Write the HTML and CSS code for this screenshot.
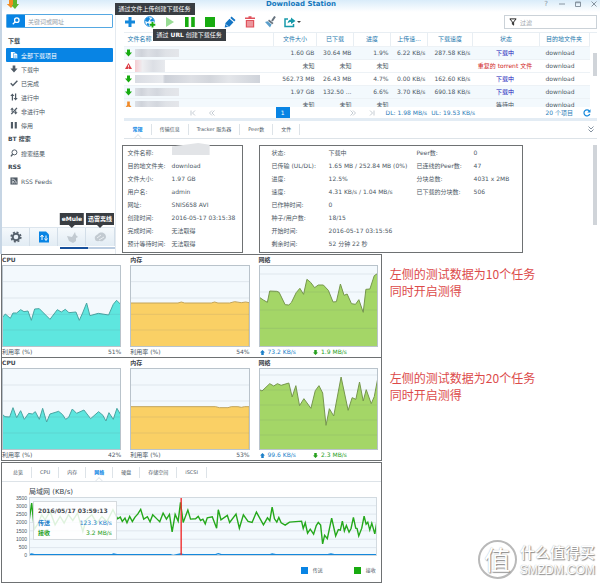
FILE: index.html
```html
<!DOCTYPE html>
<html lang="zh-CN">
<head>
<meta charset="utf-8">
<title>Download Station</title>
<link rel="stylesheet" href="styles.css">
</head>
<body>
<section class="window">
  <header class="titlebar">
    <svg class="logo" viewBox="0 0 12 9"><path d="M2 0h4v3h2L4 8 0 4h2z" fill="#f08a1c"/><path d="M6 0h4v4h2L8 9 4 5h2z" fill="#5db52c"/><path d="M2 0h4v4L4 7 0 4h2z" fill="#f28c22"/></svg>
    <h1>Download Station</h1>
    <div class="controls">
      <button aria-label="帮助">?</button>
      <button aria-label="最小化"><svg viewBox="0 0 6 6"><path d="M0 3h6"/></svg></button>
      <button aria-label="最大化"><svg viewBox="0 0 6 6"><path d="M.5 1h5v4.500h-5zM.5 1.700h5"/></svg></button>
      <button aria-label="关闭"><svg viewBox="0 0 6 6"><path d="M.5.5l5 5m0-5l-5 5"/></svg></button>
    </div>
  </header>
  <div class="workspace">
    <aside class="sidebar">
      <form class="search">
        <button type="button" aria-label="搜索"><svg viewBox="0 0 10 10"><circle cx="6" cy="4" r="2.800"/><path d="M4 6L1 9"/></svg></button>
        <input type="text" aria-label="关键词或网址" placeholder="关键词或网址">
      </form>
      <nav>
        <h2>下载</h2>
        <a class="on" href="#"><svg viewBox="0 0 9 9"><path d="M1 1h4l2 2v5H1z" fill="#fff"/><path d="M4 2.500h3L8.500 4v4.500H4z" fill="#fff" stroke="#0884e4" stroke-width=".6"/><path d="M5 5.500h2.500M5 7h2.500" stroke="#0884e4" stroke-width=".6"/></svg>全部下载项目</a>
        <a href="#"><svg viewBox="0 0 9 9"><path d="M3 .5h3V4h2.500l-4 4.500L.5 4H3z"/></svg>下载中</a>
        <a href="#"><svg viewBox="0 0 9 9"><path class="ln" d="M.8 4.800l2.400 2.400L8.300 2"/></svg>已完成</a>
        <a href="#"><svg viewBox="0 0 9 9"><path d="M2 8.500V3.500H.3L2.700.5 5 3.500H3.400v5zM5.600.5H7v5h1.700L6.300 8.500 4 5.500h1.600z"/></svg>进行中</a>
        <a href="#"><svg viewBox="0 0 9 9"><path d="M.3 3L2.400.5 4.500 3H3v2.500H1.800V3zM5.800 4H7v2h1.500L6.400 8.500 4.300 6h1.500z"/><path class="ln" d="M7.800 1L1.500 8"/></svg>非进行中</a>
        <a href="#"><svg viewBox="0 0 9 9"><path d="M1 1h2.400v7.500H1zM5.300 1h2.400v7.500H5.300z"/></svg>停用</a>
        <h2>BT 搜索</h2>
        <a href="#"><svg viewBox="0 0 9 9"><circle class="thin" cx="5" cy="3.800" r="2.800"/><path class="ln" d="M3 6L1 8.300"/></svg>搜索结果</a>
        <h2>RSS</h2>
        <a href="#"><svg viewBox="0 0 9 9"><path d="M.5.5h8v8h-8z"/><path d="M2 4.500a2.600 2.600 0 0 1 2.700 2.700M2 2.300a4.800 4.800 0 0 1 5 4.900" fill="none" stroke="#fff" stroke-width=".9"/><circle cx="2.600" cy="6.600" r=".7" fill="#fff"/></svg>RSS Feeds</a>
      </nav>
      <div class="modes">
        <button aria-label="设置"><svg viewBox="0 0 12 12"><circle cx="6" cy="6" r="3.300" fill="none" stroke="#56616c" stroke-width="2"/><circle cx="6" cy="6" r="4.800" fill="none" stroke="#56616c" stroke-width="1.600" stroke-dasharray="2 1.770"/></svg></button>
        <button aria-label="下载"><svg viewBox="0 0 12 12"><path d="M1 .5h7l3 3v8H1z" fill="#0884e4"/><path d="M4 9V5M2.500 6L4 4l1.500 2M8 4.500v4M6.500 7.500L8 9.500l1.500-2" fill="none" stroke="#fff"/></svg></button>
        <button aria-label="eMule"><svg viewBox="0 0 12 12"><path d="M1 5l5 1 3-5 .8 3L12 6l-2 1v3l-3 2-4-2z" fill="#c2cad1"/></svg><span class="tip up">eMule</span></button>
        <button aria-label="迅雷离线"><svg viewBox="0 0 12 12"><path d="M1 8c-1-3 2-4 3-5 3-3 8-1 8 3 0 2-2 2-2 3-2 2-3 1-4 1S1 11 1 8z" fill="#c2cad1"/><path d="M3 7l4-3M5 9l5-3" stroke="#e9eef2"/></svg><span class="tip up">迅雷离线</span></button>
      </div>
      <div class="underline"></div>
    </aside>

    <main class="main">
      <div class="toolbar">
        <button aria-label="添加"><svg viewBox="0 0 12 12"><path d="M4.500 1h3v3.500H11v3H7.500V11h-3V7.500H1v-3h3.500z" fill="#1488dc"/></svg><span class="tip file">通过文件上传创建下载任务</span></button>
        <button aria-label="添加 URL"><svg viewBox="0 0 12 12"><circle cx="5.500" cy="5.500" r="4.800" fill="#eef8fd" stroke="#1488dc"/><path d="M2 2l3-1 1 2-2 3-3-1zM6 4l3-2 1 3-2 3zM3 7l3 1-1 2-2-1z" fill="#1488dc"/><path d="M8.500 5.500v6M5.500 8.500h6" stroke="#fff" stroke-width="3.400"/><path d="M8.500 6v5.500M5.800 8.700h5.500" stroke="#18ab10" stroke-width="1.900"/></svg><span class="tip url">通过 <b>URL</b> 创建下载任务</span></button>
        <button aria-label="开始"><svg viewBox="0 0 12 12"><path d="M2 1l8 5-8 5z" fill="#98dc94"/></svg></button>
        <button aria-label="暂停"><svg viewBox="0 0 12 12"><path d="M1 1h3.600v10H1zM7.200 1h3.600v10H7.200z" fill="#18ab10"/></svg></button>
        <button aria-label="停止"><svg viewBox="0 0 12 12"><path d="M1 1h10v10H1z" fill="#18ab10"/></svg></button>
        <button aria-label="编辑"><svg viewBox="0 0 12 12"><path d="M7.500.5l4 3.500-1.200 1.400-4-3.500zM5.500 2.800l4 3.500-4 4.200-4.800 1L1.500 7z" fill="#1475c4"/><path d="M2 8.500L4 10.500" stroke="#fff"/></svg></button>
        <button aria-label="删除"><svg viewBox="0 0 12 12"><path d="M1 1.500h3.500V.3h3v1.200H11V3H1zM1.800 4h8.400v7.500H1.800z" fill="#e0525c"/><path d="M4 5v5.500M6 5v5.500M8 5v5.500" stroke="#fff" stroke-width=".8"/></svg></button>
        <button aria-label="清除"><svg viewBox="0 0 12 12"><path d="M11 .5L8 5" stroke="#66727e" stroke-width="2"/><path d="M5 3.500l4.500 3.500-1.200 1.300L4 5z" fill="#66727e"/><path d="M3.600 5.200l4 3.400L6 11.500 1 6z" fill="#5b9fcb"/></svg></button>
        <button aria-label="分享"><svg viewBox="0 0 12 12"><path d="M4 3H1v7.500h8.500V8" fill="none" stroke="#179aaa" stroke-width="1.500"/><path d="M3.500 7.500C4 4.500 5.500 3.500 7 3.500v-2L11.500 5 7 8V6C5.500 6 4.500 6.500 3.500 7.500z" fill="#179aaa"/></svg><i class="caret"></i></button>
        <label class="filter"><svg viewBox="0 0 9 9"><path d="M1 1h7L5.200 4.500V8L3.800 7V4.500z" fill="none" stroke="#222" stroke-width="1.100"/></svg><input type="text" aria-label="过滤" placeholder="过滤"></label>
      </div>

      <div class="tasks">
        <table>
          <colgroup><col><col class="c-size"><col class="c-num"><col class="c-num"><col class="c-num"><col class="c-speed"><col class="c-status"><col class="c-dest"></colgroup>
          <thead><tr><th>文件名称</th><th>文件大小</th><th>已下载</th><th>进度</th><th>上传速...</th><th>下载速度</th><th>状态</th><th>目的地文件夹</th></tr></thead>
          <tbody>
            <tr class="alt"><td><div class="name"><svg class="down" viewBox="0 0 8 8"><path d="M2.300 0h3.400v3.500H8L4 8 0 3.500h2.300z"/></svg><span class="mask"></span></div></td><td>1.60 GB</td><td>30.64 MB</td><td>1.9%</td><td>6.22 KB/s</td><td>287.58 KB/s</td><td class="run">下载中</td><td>download</td></tr>
            <tr><td><div class="name"><svg class="warn" viewBox="0 0 8 8"><path d="M4 .5L8 7.500H0z"/><path d="M4 3v2.300M4 6v1" stroke="#fff"/></svg><span class="mask pink"></span></div></td><td>未知</td><td>未知</td><td>未知</td><td></td><td></td><td class="bad">重复的 torrent 文件</td><td>download</td></tr>
            <tr><td><div class="name"><svg class="down" viewBox="0 0 8 8"><path d="M2.300 0h3.400v3.500H8L4 8 0 3.500h2.300z"/></svg><span class="mask long"></span></div></td><td>562.73 MB</td><td>26.43 MB</td><td>4.7%</td><td>0.00 KB/s</td><td>162.60 KB/s</td><td class="run">下载中</td><td>download</td></tr>
            <tr class="alt"><td><div class="name"><svg class="down" viewBox="0 0 8 8"><path d="M2.300 0h3.400v3.500H8L4 8 0 3.500h2.300z"/></svg><span class="mask"></span></div></td><td>1.97 GB</td><td>132.50 ...</td><td>6.6%</td><td>3.70 KB/s</td><td>690.18 KB/s</td><td class="run">下载中</td><td>download</td></tr>
            <tr class="alt"><td><div class="name"><svg class="wait" viewBox="0 0 8 8"><path d="M2.500 0h3v4L8 7H5L3.500 5.500 2 7.500H0L2.500 4z"/></svg><span class="mask"></span></div></td><td>未知</td><td>未知</td><td>未知</td><td></td><td></td><td>等待中</td><td>download</td></tr>
          </tbody>
        </table>
        <div class="rail"><i></i></div>
      </div>

      <div class="pager">
        <div class="back"><button aria-label="首页"><svg viewBox="0 0 6 6"><path d="M1 .5v5M5 .5L2.500 3 5 5.500"/></svg></button><button aria-label="上一页"><svg viewBox="0 0 6 6"><path d="M3 .5L.5 3 3 5.500M5.500.5L3 3l2.500 2.500"/></svg></button></div>
        <button class="page">1</button>
        <div class="fwd"><button aria-label="下一页"><svg viewBox="0 0 6 6"><path d="M.5.5L3 3 .5 5.500M3 .5L5.500 3 3 5.500"/></svg></button><button aria-label="末页"><svg viewBox="0 0 6 6"><path d="M5 .5v5M1 .5L3.500 3 1 5.500"/></svg></button></div>
        <span class="rate">DL: 1.98 MB/s</span><span class="rate">UL: 19.53 KB/s</span>
        <span class="total">20 个项目</span>
        <button class="refresh" aria-label="刷新"><svg viewBox="0 0 8 8"><path d="M6.300 2A3 3 0 1 0 6.800 5"/><path d="M7.500.3v3.200H4.300z" class="tipfill"/></svg></button>
      </div>

      <div class="tabs">
        <button class="on">常规</button><button>传输信息</button><button>Tracker 服务器</button><button>Peer数</button><button>文件</button>
        <svg class="collapse" viewBox="0 0 6 7"><path d="M.5.5L3 3 5.500.5M.5 3.500L3 6l2.500-2.500"/></svg>
      </div>

      <div class="details">
        <dl class="box general">
          <dt>文件名称:</dt><dd><span class="smudge"></span></dd>
          <dt>目的地文件夹:</dt><dd>download</dd>
          <dt>文件大小:</dt><dd>1.97 GB</dd>
          <dt>用户名:</dt><dd>admin</dd>
          <dt>网址:</dt><dd>SNIS658 AVI</dd>
          <dt>创建时间:</dt><dd>2016-05-17 03:15:38</dd>
          <dt>完成时间:</dt><dd>无法取得</dd>
          <dt>预计等待时间:</dt><dd>无法取得</dd>
        </dl>
        <div class="box transfer">
          <dl>
            <dt>状态:</dt><dd>下载中</dd>
            <dt>已传输 (UL/DL):</dt><dd>1.65 MB / 252.84 MB (0%)</dd>
            <dt>进度:</dt><dd>12.5%</dd>
            <dt>速度:</dt><dd>4.31 KB/s / 1.04 MB/s</dd>
            <dt>已作种时间:</dt><dd>0</dd>
            <dt>种子/用户数:</dt><dd>18/15</dd>
            <dt>开始时间:</dt><dd>2016-05-17 03:15:56</dd>
            <dt>剩余时间:</dt><dd>52 分钟 22 秒</dd>
          </dl>
          <dl>
            <dt>Peer数:</dt><dd>0</dd>
            <dt>已连线的Peer数:</dt><dd>47</dd>
            <dt>分块总数:</dt><dd>4031 x 2MB</dd>
            <dt>已下载的分块数:</dt><dd>506</dd>
          </dl>
        </div>
        <div class="rail tall"><i></i></div>
      </div>
    </main>
  </div>
</section>

<section class="stats">
  <div class="panel trio first">
    <figure>
      <figcaption>CPU</figcaption>
      <svg class="area" viewBox="6 46 358 246" preserveAspectRatio="none"><path class="cpu" d="M6 292V205L16 193 31 206 39 190 50 190 62 180 72 186 84 184 94 212 104 178 118 177 150 209 172 180 184 187 196 179 207 189 228 187 238 212 248 190 260 160 270 198 295 191 326 196 340 164 350 152 364 166V292z"/><path class="grid" d="M6 96H364M6 145H364M6 194H364M6 241H364"/></svg>
      <p><span>利用率 (%)</span><span>51%</span></p>
    </figure>
    <figure>
      <figcaption>内存</figcaption>
      <svg class="area" viewBox="391 46 358 246" preserveAspectRatio="none"><path class="mem" d="M391 292V160H535L545 157 555 160H635L645 157 655 160H690L705 156 725 159 738 157 749 159V292z"/><path class="grid" d="M391 96H749M391 145H749M391 194H749M391 241H749"/></svg>
      <p><span>利用率 (%)</span><span>54%</span></p>
    </figure>
    <figure>
      <figcaption>网络</figcaption>
      <svg class="area" viewBox="27 46 356 246" preserveAspectRatio="none"><path class="net" d="M27 292V142L40 151 52 158 59 124 80 125 87 128 105 165 116 166 124 158 138 129 149 116 160 134 170 89 181 98 193 114 204 106 219 106 234 122 248 157 258 156 270 103 281 137 290 133 303 162 315 164 325 150 338 188 346 119 358 118 371 78 383 70V292z"/><path class="grid" d="M27 73H383M27 127H383M27 181H383M27 236H383"/></svg>
      <p class="io"><span class="tx"><svg viewBox="0 0 6 6"><path d="M3 0l3 3H4.500v3h-3V3H0z"/></svg>73.2 KB/s</span><span class="rx"><svg viewBox="0 0 6 6"><path d="M3 6L0 3h1.500V0h3v3H6z"/></svg>1.9 MB/s</span></p>
    </figure>
  </div>
  <p class="note">左侧的测试数据为10个任务<br>同时开启测得</p>

  <div class="panel trio second">
    <figure>
      <figcaption>CPU</figcaption>
      <svg class="area" viewBox="6 40 358 246" preserveAspectRatio="none"><path class="cpu" d="M6 286V178L15 186 29 187 39 159 50 189 62 168 73 194 86 176 97 178 106 171 118 194 128 161 140 202 150 178 176 170 188 180 197 194 206 188 217 163 230 176 252 166 272 192 296 171 309 182 318 199 327 174 340 194 351 161 364 183V286z"/><path class="grid" d="M6 91H364M6 139H364M6 187H364M6 235H364"/></svg>
      <p><span>利用率 (%)</span><span>42%</span></p>
    </figure>
    <figure>
      <figcaption>内存</figcaption>
      <svg class="area" viewBox="391 40 358 246" preserveAspectRatio="none"><path class="mem" d="M391 286V156H648L659 159H685L695 156H715L725 158 735 156H749V286z"/><path class="grid" d="M391 91H749M391 139H749M391 187H749M391 235H749"/></svg>
      <p><span>利用率 (%)</span><span>53%</span></p>
    </figure>
    <figure>
      <figcaption>网络</figcaption>
      <svg class="area" viewBox="27 40 356 246" preserveAspectRatio="none"><path class="net" d="M27 286V104L36 109 59 87 71 94 82 87 93 92 116 85 126 127 137 93 148 153 161 132 182 161 195 108 206 93 217 115 227 212 237 162 250 184 272 67 293 167 305 129 316 134 327 82 338 139 347 105 362 147 371 126 383 63V286z"/><path class="grid" d="M27 61H383M27 106H383M27 151H383M27 196H383M27 241H383"/></svg>
      <p class="io"><span class="tx"><svg viewBox="0 0 6 6"><path d="M3 0l3 3H4.500v3h-3V3H0z"/></svg>99.6 KB/s</span><span class="rx"><svg viewBox="0 0 6 6"><path d="M3 6L0 3h1.500V0h3v3H6z"/></svg>2.3 MB/s</span></p>
    </figure>
  </div>
  <p class="note">左侧的测试数据为20个任务<br>同时开启测得</p>

  <div class="panel lan">
    <div class="tabs">
      <button>总览</button><button>CPU</button><button>内存</button><button class="on">网络</button><button>硬盘</button><button>存储空间</button><button>iSCSI</button>
    </div>
    <h3>局域网 (KB/s)</h3>
    <div class="plot">
      <ul><li>3500</li><li>3000</li><li>2500</li><li>2000</li><li>1500</li><li>1000</li><li>500</li><li>0</li></ul>
      <div class="canvas">
        <svg class="lines" viewBox="87 112 1040 176" preserveAspectRatio="none">
          <path class="grid" d="M87 138H1127M87 163H1127M87 188H1127M87 213H1127M87 238H1127M87 263H1127"/>
          <path class="recv" d="M88 178L95 130 103 208 115 190 125 165 135 180 150 155 165 195 180 170 192 190 205 165 218 182 232 160 248 215 258 180 275 165 290 190 305 170 320 185 338 150 352 177 360 172 366 185 374 175 380 189 388 170 396 185 404 172 412 163 421 149 430 178 441 171 449 186 457 165 470 178 478 186 488 160 498 178 507 164 515 216 524 164 533 184 540 128 548 188 562 151 570 178 585 177 593 170 600 182 607 178 614 192 620 174 635 171 648 205 653 150 661 180 680 167 687 188 706 163 716 205 728 165 742 185 754 188 767 157 788 195 800 174 807 183 814 142 821 177 828 187 834 173 841 189 853 196 866 187 902 184 907 206 913 189 920 220 928 208 938 223 946 197 952 188 959 196 965 252 971 226 979 236 992 175 1004 228 1012 209 1018 211 1024 184 1030 213 1036 197 1044 217 1050 206 1057 173 1064 205 1068 206 1073 228 1082 205 1089 169 1095 193 1100 187 1106 210 1112 190 1121 222 1127 187"/>
          <path class="send" d="M87 284L95 282 103 284H335L340 282 350 284H510L518 286 540 282 550 284H645L653 281 662 284H808L814 282 825 284H980L990 282 1000 284H1127"/>
          <path class="cursor" d="M542 112V288"/>
        </svg>
        <div class="readout">
          <strong>2016/05/17 03:59:13</strong>
          <p class="tx"><b>传送</b><span>123.3 KB/s</span></p>
          <p class="rx"><b>接收</b><span>3.2 MB/s</span></p>
        </div>
      </div>
    </div>
    <div class="legend"><span><i class="blue"></i>传送</span><span><i class="green"></i>接收</span></div>
  </div>
  <div class="brand">
    <span class="seal">值</span>
    <div><b>什么值得买</b><span>SMZDM.COM</span></div>
  </div>
</section>
</body>
</html>
```

FILE: styles.css
```css
* { box-sizing: border-box; margin: 0; padding: 0; }
body {
  font: 6px/13px "DejaVu Sans", "Noto Sans CJK SC", sans-serif;
  color: #4c5864;
  background: #fff;
  overflow-x: hidden;
}
button, input { font: inherit; color: inherit; background: none; border: 0; min-width: 0; }
svg { display: block; }
a { color: inherit; text-decoration: none; }
ul { list-style: none; }

/* window frame */
.window { border-left: 2px solid #c6d5e4; }
.titlebar {
  display: grid;
  grid-template-columns: 1fr auto 1fr;
  height: 12px;
  line-height: 8px;
  background: linear-gradient(#d9ecf9, #fff);
}
.logo { width: 12px; height: 9px; margin-left: 5px; }
.titlebar h1 { font-size: 7px; color: #1578bd; }
.controls { display: flex; justify-content: flex-end; gap: 10px; padding-right: 3px; color: #8794a0; font-size: 7px; }
.controls button { width: 6px; height: 8px; line-height: 8px; }
.controls svg { width: 6px; height: 6px; fill: none; stroke: #8794a0; }
.workspace { display: flex; }

/* sidebar */
.sidebar { flex: 0 0 19%; display: flex; flex-direction: column; border-right: 1px solid #e4eaf0; padding-top: 2px; }
.search { display: flex; height: 14px; margin: 0 2px 6px 4px; border: 1px solid #55a8e2; border-radius: 1px; }
.search button { flex: 0 0 18px; background: #0884e4; display: grid; place-items: center; }
.search svg { width: 8px; height: 8px; fill: none; stroke: #fff; stroke-width: 1.600; }
.search input { flex: 1; padding-left: 3px; }
input::placeholder { color: #9aa3ab; opacity: 1; }
.sidebar nav { margin: 0 2px 0 4px; }
.sidebar h2 { font-size: 6px; line-height: 14px; color: #414b55; padding-left: 2px; }
.sidebar a { display: flex; align-items: center; gap: 3px; height: 14px; padding-left: 4px; border-radius: 1px; }
.sidebar a svg { width: 8px; height: 8px; fill: #505b66; }
.sidebar .on { background: #0884e4; color: #fff; }
.ln { fill: none; stroke: #505b66; stroke-width: 1.600; }
.thin { fill: none; stroke: #505b66; stroke-width: 1.100; }
.modes { display: flex; height: 19px; margin-top: auto; background: linear-gradient(#f5f9fc, #e2ecf4); border-top: 1px solid #dce5ed; }
.modes button { position: relative; flex: 1; display: grid; place-items: center; border-right: 1px solid #d3dee8; }
.modes svg { width: 12px; height: 12px; }
.underline { height: 2px; margin: 1px 0 5px 58px; background: linear-gradient(90deg, #17509c 50%, #b9cbe0 50%); }

/* dark hints over the controls */
.tip { position: absolute; z-index: 2; white-space: nowrap; background: #393d42; color: #fff; line-height: 12px; padding: 0 4px; }
.tip.up { bottom: 21px; left: 50%; transform: translateX(-50%); padding: 0 2px; font-weight: bold; }
.tip.up::after { content: ""; position: absolute; top: 100%; left: 50%; margin-left: -3px; border: 3px solid transparent; border-top-color: #393d42; border-bottom: 0; }
.tip.file { left: -9px; bottom: 13px; }
.tip.url { left: 9px; top: 13px; }

/* main area */
.main { flex: 1; min-width: 0; padding: 0 3px 0 8px; }
.toolbar { display: flex; align-items: center; gap: 8px; height: 20px; }
.toolbar button { position: relative; width: 12px; height: 12px; }
.toolbar button svg { width: 12px; height: 12px; }
.caret { position: absolute; left: 13px; top: 5px; border: 2px solid transparent; border-top-color: #444; border-bottom: 0; }
.filter { display: flex; align-items: center; gap: 3px; width: 93px; height: 14px; margin-left: auto; padding-left: 4px; border: 1px solid #cbd2d8; }
.filter svg { width: 8px; height: 8px; }
.filter input { flex: 1; }

.tasks { display: flex; height: 75px; overflow: hidden; border-top: 1px solid #e8eef3; }
table { flex: 1; width: 100%; table-layout: fixed; border-collapse: collapse; }
.c-size { width: 43px; }
.c-num { width: 37px; }
.c-speed { width: 45px; }
.c-status { width: 67px; }
.c-dest { width: 50px; }
th, td { height: 13px; line-height: 12px; white-space: nowrap; text-align: right; padding: 0 2px 0 0; border-bottom: 1px solid #edf2f6; }
th { font-weight: normal; color: #2478ae; text-align: center; border-right: 1px solid #e8eef3; padding: 0; }
th:first-child { text-align: left; padding-left: 4px; }
th:last-child, td:last-child { text-align: left; padding-left: 6px; }
td:nth-child(7) { text-align: center; }
.alt { background: #f3f9fd; }
.run { color: #1414b8; }
.bad { color: #d01c24; }
.name { display: flex; align-items: center; gap: 3px; padding-left: 1px; }
.name svg { width: 7px; height: 8px; }
.down { fill: #18ab10; }
.warn { fill: #dc3c44; }
.wait { fill: #f08a28; }
.mask { width: 44px; height: 8px; background: linear-gradient(90deg, #dde0e6, #cfd3da 15%, #dcdfe5 30%, #d3d7de 50%, #dfe2e7 70%, #e4e6ea); }
.mask.long { width: 125px; background: linear-gradient(90deg, #d9dce3, #e8eaee 22%, #ccd0d8 24%, #dee0e5 45%, #d3d6dc 60%, #e4e6ea 75%, #cfd3da); }
.mask.pink { width: 30px; height: 12px; background: linear-gradient(90deg, #f6cdd2, #eeeef1 25%, #dcdfe5 60%, #e8eaee); }
.rail { flex: 0 0 7px; padding: 20px 0 0 3px; }
.rail i { display: block; width: 4px; height: 23px; background: #d0d4d9; }

.pager { display: flex; align-items: center; height: 11px; color: #2d7db8; line-height: 11px; }
.pager svg { width: 6px; height: 6px; fill: none; stroke: #c5ccd3; }
.pager .back, .pager .fwd { display: flex; gap: 13px; }
.pager .back { margin-left: 66px; }
.pager .page { width: 14px; height: 11px; margin: 0 60px 0 61px; background: #0884e4; color: #fff; }
.pager .fwd { margin-right: 11px; }
.rate { margin-right: 4px; white-space: nowrap; }
.total { margin-left: auto; }
.pager .refresh { margin: 0 6px 0 10px; }
.pager .refresh svg { width: 8px; height: 8px; stroke: #1488dc; stroke-width: 1.200; }
.pager .tipfill { fill: #1488dc; stroke: none; }

.tabs { display: flex; align-items: center; height: 18px; border-bottom: 1px solid #dde3e8; font-size: 5px; }
.tabs button { position: relative; height: 11px; line-height: 11px; padding: 0 8px; border-right: 1px solid #dde3e8; }
.tabs .on { color: #0884e4; font-weight: bold; }
.tabs .on::after { content: ""; position: absolute; left: 50%; bottom: -6px; width: 5px; height: 5px; margin-left: -3px; background: #fff; border: solid #dde3e8; border-width: 1px 0 0 1px; transform: rotate(45deg); clip-path: polygon(0 0, 100% 0, 0 100%); }
.collapse { width: 6px; height: 7px; margin: 0 3px 0 auto; fill: none; stroke: #8592a0; }
.main .tabs { height: 21px; border-top: 3px solid #e3ecf4; padding-left: 1px; }

.details { display: flex; align-items: flex-start; padding: 6px 0 1px; margin-left: -2px; }
.box { height: 108px; border: 1px solid #6e7173; white-space: nowrap; }
dl { display: grid; grid-auto-rows: 13px; align-content: start; }
.general { flex: 0 0 121px; grid-template-columns: 44px 1fr; padding-left: 5px; margin-right: 16px; }
.transfer { flex: 0 0 264px; display: flex; padding-left: 12px; }
.transfer dl { flex: 0 0 145px; grid-template-columns: 57px 1fr; }
.transfer dl + dl { flex: 1 1 0; min-width: 0; }
.smudge { display: block; width: 38px; height: 12px; margin-top: -3px; background: #e2e4e7; clip-path: polygon(0 30%, 70% 0, 100% 15%, 100% 100%, 0 100%); }
.rail.tall { margin-left: auto; padding-top: 0; }
.rail.tall i { height: 80px; }

/* measured load */
.stats { display: grid; grid-template-columns: minmax(0, 7fr) minmax(0, 4fr); align-items: start; }
.panel { border: 1px solid #6e7173; margin-left: 1px; }
.trio { display: grid; grid-template-columns: repeat(3, 1fr); gap: 9px; padding-right: 3px; }
.second { border-top: 0; }
figcaption { font-weight: bold; line-height: 10px; color: #3f464d; }
.area { width: 100%; height: 82px; background: #f3f9fd; outline: 1px solid #b9c3cb; outline-offset: -1px; }
.area path { vector-effect: non-scaling-stroke; stroke-width: 1; }
.cpu { fill: #5ee6df; stroke: #4aa5a2; }
.mem { fill: #fad065; stroke: #c2a45b; }
.net { fill: #a4d667; stroke: #76974d; }
.grid { fill: none; stroke: #506478; stroke-opacity: .120; vector-effect: non-scaling-stroke; stroke-width: 1; }
figure p { display: flex; justify-content: space-between; line-height: 10px; }
figure .io { justify-content: flex-start; gap: 17px; padding-left: 1px; }
.io span { display: flex; align-items: center; gap: 3px; }
.io svg { width: 5px; height: 5px; fill: currentColor; }
.tx { color: #1c7fc8; }
.rx { color: #25a01c; }
.note { font: 12px/17px "Noto Sans CJK SC", sans-serif; color: #dc4a4a; padding: 11px 0 0 8px; white-space: nowrap; }

.lan { margin-top: 1px; padding-bottom: 7px; }
.lan .tabs { padding-left: 3px; height: 19px; }
.lan h3 { font-size: 7px; font-weight: normal; line-height: 10px; margin: 5px 0 0 27px; color: #39434d; }
.plot { display: flex; margin-right: 4px; }
.plot ul { flex: 0 0 27px; padding-right: 2px; margin: -3px 0; text-align: right; font: 5px/8px "Liberation Sans", sans-serif; display: flex; flex-direction: column; justify-content: space-between; }
.canvas { position: relative; flex: 1; }
.lines { width: 100%; height: 59px; background: #f3f9fd; outline: 1px solid #d2dae0; outline-offset: -1px; }
.lines path { fill: none; vector-effect: non-scaling-stroke; }
.recv { stroke: #25a81b; stroke-width: 1.400; }
.send { stroke: #1488dc; stroke-width: 1.400; }
.cursor { stroke: #ef2f2f; stroke-width: 1.400; }
.readout { position: absolute; left: 4px; top: 4px; width: 84px; padding: 2px 4px 1px; line-height: 10px; background: rgba(255, 255, 255, .850); border: 1px solid #d5dade; }
.readout strong { display: block; line-height: 14px; color: #444a50; white-space: nowrap; }
.readout p { display: flex; justify-content: space-between; }
.legend { display: flex; justify-content: flex-end; gap: 31px; margin: 9px 5px 0 0; font-size: 5px; line-height: 10px; }
.legend span { display: flex; align-items: center; gap: 5px; }
.legend i { width: 7px; height: 7px; }
.blue { background: #0884e4; }
.green { background: #18ab10; }

.brand { display: flex; align-items: flex-end; justify-content: flex-end; align-self: end; gap: 3px; padding: 0 5px 4px 0; color: #fff; text-shadow: 1px 1px 1px #8b8b8b, 0 0 1px #aaa; }
.seal { width: 39px; height: 39px; border: 2px solid #b9b9b9; border-radius: 50%; font: 26px/34px "Noto Sans CJK SC", sans-serif; text-align: center; }
.brand b { display: block; font: 500 15px/20px "Noto Sans CJK SC", sans-serif; }
.brand div span { font: 12px/17px "Liberation Sans", sans-serif; display: block; }
```
